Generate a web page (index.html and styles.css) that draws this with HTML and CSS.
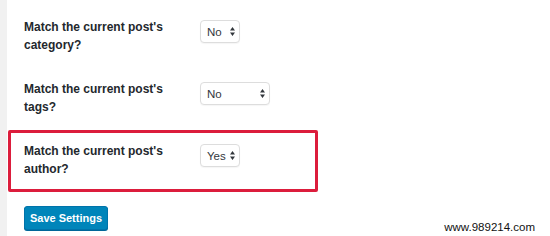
FILE: index.html
```html
<!DOCTYPE html>
<html lang="en">
<head>
    <meta charset="UTF-8">
    <title>Related Posts Settings</title>
    <link rel="stylesheet" href="styles.css">
</head>
<body>
    <div class="sidebar"></div>

    <div class="content">
        <div class="settings">
            <div class="row">
                <div class="row-label">Match the current post's category?</div>
                <div class="select select-short">
                    <span>No</span>
                    <svg class="arrows" width="5" height="9" viewBox="0 0 5 9"><path d="M2.5 0L5 3.5H0z M2.5 9L5 5.5H0z" fill="#32373c"/></svg>
                </div>
            </div>

            <div class="row">
                <div class="row-label">Match the current post's tags?</div>
                <div class="select select-wide">
                    <span>No</span>
                    <svg class="arrows" width="5" height="9" viewBox="0 0 5 9"><path d="M2.5 0L5 3.5H0z M2.5 9L5 5.5H0z" fill="#32373c"/></svg>
                </div>
            </div>

            <div class="row highlighted">
                <div class="row-label">Match the current post's author?</div>
                <div class="select select-short">
                    <span>Yes</span>
                    <svg class="arrows" width="5" height="9" viewBox="0 0 5 9"><path d="M2.5 0L5 3.5H0z M2.5 9L5 5.5H0z" fill="#32373c"/></svg>
                </div>
            </div>
        </div>

        <button class="button-primary" type="button">Save Settings</button>
    </div>

    <div class="watermark">www.989214.com</div>
</body>
</html>
```

FILE: styles.css
```css
* {
    margin: 0;
    padding: 0;
    box-sizing: border-box;
}

body {
    background-color: #fff;
    font-family: 'Liberation Sans', Arial, sans-serif;
    color: #23282d;
    display: flex;
    min-height: 236px;
    position: relative;
}

.sidebar {
    width: 7px;
    background-color: #f1f1f1;
    flex-shrink: 0;
}

.content {
    padding-top: 6px;
    padding-left: 1px;
}

.settings {
    width: 310px;
}

.row {
    display: flex;
    align-items: flex-start;
    height: 62px;
    border: 3px solid transparent;
    border-radius: 2px;
    padding: 8px 13px;
}

.row.highlighted {
    border-color: #dc1d3c;
}

.row-label {
    width: 176px;
    font-size: 12px;
    font-weight: 700;
    line-height: 18px;
    padding-top: 1px;
    padding-right: 30px;
    flex-shrink: 0;
}

.select {
    margin-top: 3px;
    height: 23px;
    border: 1px solid #ddd;
    border-radius: 4px;
    background: #fff;
    display: flex;
    align-items: center;
    justify-content: space-between;
    padding: 0 4px 0 6px;
    font-size: 11.5px;
    color: #32373c;
    box-shadow: 0 1px 1px rgba(0, 0, 0, 0.04);
}

.select-short {
    width: 40px;
}

.select-short span {
    margin-right: 3px;
}

.select-wide {
    width: 70px;
}

.button-primary {
    margin-top: 14px;
    margin-left: 16px;
    width: 84px;
    height: 24px;
    background-color: #0085ba;
    border: 1px solid #0073aa;
    border-radius: 3px;
    color: #fff;
    font-family: 'Liberation Sans', Arial, sans-serif;
    font-size: 11px;
    font-weight: 700;
    box-shadow: 0 1px 0 #006799;
}

.watermark {
    position: absolute;
    right: 15px;
    bottom: 3px;
    font-size: 11.5px;
    color: #111;
}
```
